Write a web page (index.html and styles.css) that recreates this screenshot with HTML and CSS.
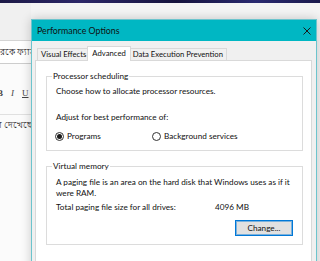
FILE: index.html
```html
<!DOCTYPE html>
<html lang="en">
<head>
    <meta charset="UTF-8">
    <title>Performance Options</title>
    <link rel="stylesheet" href="styles.css">
</head>
<body>

    <div class="desktop"></div>
    <div class="app">
        <div class="app-chrome"></div>
        <div class="post-title">রকে ফ্যাস্ট করুন</div>
        <div class="toolbar">
            <span class="tb-bold">B</span>
            <span class="tb-italic">I</span>
            <span class="tb-under">U</span>
        </div>
        <div class="post-body">যা দেখেছেন</div>
    </div>

    <div class="dialog">
        <div class="titlebar">
            <span class="title">Performance Options</span>
            <svg class="close" width="8" height="8" viewBox="0 0 8 8">
                <path d="M0.5 0.5 L7.5 7.5 M7.5 0.5 L0.5 7.5" stroke="#1a1a1a" stroke-width="1" fill="none"/>
            </svg>
        </div>
        <div class="dialog-body">
            <div class="tabs">
                <div class="tab">Visual Effects</div>
                <div class="tab active">Advanced</div>
                <div class="tab">Data Execution Prevention</div>
            </div>
            <div class="panel">
                <fieldset class="group">
                    <legend>Processor scheduling</legend>
                    <p class="intro">Choose how to allocate processor resources.</p>
                    <p class="adjust">Adjust for best performance of:</p>
                    <div class="radios">
                        <label class="radio"><span class="dot checked"></span>Programs</label>
                        <label class="radio"><span class="dot"></span>Background services</label>
                    </div>
                </fieldset>

                <fieldset class="group vm">
                    <legend>Virtual memory</legend>
                    <p>A paging file is an area on the hard disk that Windows uses as if it were RAM.</p>
                    <div class="total">
                        <span class="total-label">Total paging file size for all drives:</span>
                        <span>4096 MB</span>
                    </div>
                    <button class="change">Change...</button>
                </fieldset>
            </div>
        </div>
    </div>

</body>
</html>
```

FILE: styles.css
```css
/* General */
* {
    box-sizing: border-box;
}

body {
    margin: 0;
    width: 320px;
    height: 261px;
    overflow: hidden;
    position: relative;
    background: #f4f4f4;
    font-family: Lato, "Noto Sans", sans-serif;
    font-size: 8.2px;
    color: #111;
}

/* Background window */
.desktop {
    height: 3px;
    background: linear-gradient(90deg, #1c1946, #2c2768 25%, #16133d 55%, #2a2a70 80%, #1b1a4c);
}

.app {
    width: 31px;
    background: #fbfbfb;
    height: 258px;
}

.app-chrome {
    height: 38px;
    background: #f0f0f0;
    border-bottom: 1px solid #d4d4d4;
}

.post-title {
    height: 23px;
    background: #fff;
    border-bottom: 1px solid #cdcdcd;
    font-size: 9px;
    line-height: 21px;
    white-space: nowrap;
    overflow: hidden;
    color: #111;
}

.toolbar {
    height: 51px;
    border-bottom: 1px solid #e0e0e0;
    display: flex;
    gap: 8px;
    padding-top: 24px;
    margin-left: -3px;
    font-family: "Liberation Serif", serif;
    font-size: 9px;
    color: #444;
    overflow: hidden;
}

.tb-bold {
    font-weight: bold;
}

.tb-italic {
    font-style: italic;
}

.tb-under {
    text-decoration: underline;
}

.post-body {
    padding-top: 4px;
    margin-left: -6px;
    font-size: 9px;
    line-height: 11px;
    white-space: nowrap;
    overflow: hidden;
    color: #111;
}

/* Dialog window */
.dialog {
    position: absolute;
    left: 31px;
    top: 19px;
    width: 286px;
    height: 260px;
    border: 1px solid #6cc4cd;
    background: #f0f0f0;
    box-shadow: 0 0 10px rgba(0, 0, 0, 0.2);
}

.titlebar {
    height: 21px;
    background: #00b7c3;
    display: flex;
    align-items: center;
    justify-content: space-between;
    padding: 0 5px 0 5px;
}

.title {
    font-size: 8.8px;
    color: #111;
}

.dialog-body {
    padding: 5px 4px 0 3px;
}

/* Tabs */
.tabs {
    display: flex;
    align-items: flex-end;
    padding-left: 2px;
    position: relative;
    z-index: 1;
    font-size: 7.7px;
}

.tab {
    height: 12px;
    line-height: 11px;
    padding: 0 3px;
    border: 1px solid #d9d9d9;
    border-bottom: none;
    margin-right: -1px;
    background: #f0f0f0;
}

.tab.active {
    height: 15px;
    margin: 0 -2px -1px -2px;
    padding: 1px 4px 0 4px;
    background: #fff;
    position: relative;
}

.panel {
    height: 210px;
    background: #fff;
    border: 1px solid #d9d9d9;
    padding: 10px 8px 0 10px;
}

/* Group boxes */
.group {
    margin: 0;
    border: 1px solid #dcdcdc;
    padding: 4px 9px 8px 9px;
}

.group legend {
    padding: 0 1px;
    margin-left: -4px;
    line-height: 11px;
}

.group p {
    margin: 0;
    line-height: 11px;
}

.intro {
    margin-bottom: 15px !important;
}

.adjust {
    margin-bottom: 8px !important;
}

.radios {
    display: grid;
    grid-template-columns: 97px auto;
    line-height: 11px;
}

.radio {
    display: flex;
    align-items: center;
    gap: 3px;
    margin-left: -1px;
}

.dot {
    width: 9px;
    height: 9px;
    border: 1px solid #333;
    border-radius: 50%;
    background: #fff;
    display: flex;
    align-items: center;
    justify-content: center;
}

.dot.checked::after {
    content: "";
    width: 5px;
    height: 5px;
    border-radius: 50%;
    background: #1a1a1a;
}

.vm {
    margin-top: 10px;
    display: flex;
    flex-direction: column;
}

.vm p {
    padding-top: 1px;
}

.total {
    display: flex;
    margin-top: 3px;
    line-height: 11px;
}

.total-label {
    width: 159px;
}

.change {
    align-self: flex-end;
    margin-top: 7px;
    width: 58px;
    height: 16px;
    border: 1px solid #0078d7;
    box-shadow: inset 0 0 0 1px rgba(0, 120, 215, 0.45);
    background: #e1e1e1;
    font-family: inherit;
    font-size: 8.2px;
    color: #111;
    padding: 0;
}
```
